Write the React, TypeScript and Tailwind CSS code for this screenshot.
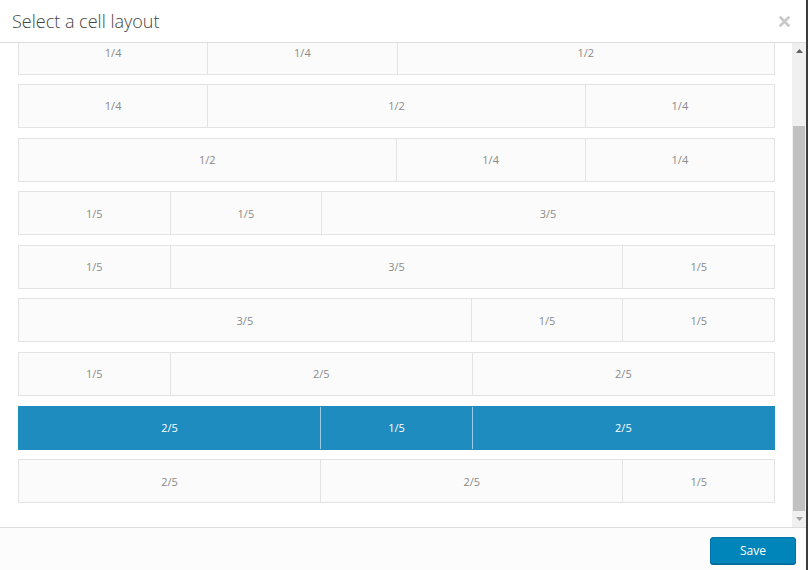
import { useState } from "react";

type Layout = { id: number; cells: { label: string; span: number }[] };

// spans out of 20 (lcm of 4 and 5)
const LAYOUTS: Layout[] = [
  { id: 1, cells: [{ label: "1/4", span: 5 }, { label: "1/4", span: 5 }, { label: "1/2", span: 10 }] },
  { id: 2, cells: [{ label: "1/4", span: 5 }, { label: "1/2", span: 10 }, { label: "1/4", span: 5 }] },
  { id: 3, cells: [{ label: "1/2", span: 10 }, { label: "1/4", span: 5 }, { label: "1/4", span: 5 }] },
  { id: 4, cells: [{ label: "1/5", span: 4 }, { label: "1/5", span: 4 }, { label: "3/5", span: 12 }] },
  { id: 5, cells: [{ label: "1/5", span: 4 }, { label: "3/5", span: 12 }, { label: "1/5", span: 4 }] },
  { id: 6, cells: [{ label: "3/5", span: 12 }, { label: "1/5", span: 4 }, { label: "1/5", span: 4 }] },
  { id: 7, cells: [{ label: "1/5", span: 4 }, { label: "2/5", span: 8 }, { label: "2/5", span: 8 }] },
  { id: 8, cells: [{ label: "2/5", span: 8 }, { label: "1/5", span: 4 }, { label: "2/5", span: 8 }] },
  { id: 9, cells: [{ label: "2/5", span: 8 }, { label: "2/5", span: 8 }, { label: "1/5", span: 4 }] },
];

export default function App() {
  const [selected, setSelected] = useState(8);

  return (
    <div
      className="w-[808px] h-[570px] flex flex-col bg-white border-r-2 border-[#3c3c3c] overflow-hidden"
      style={{ fontFamily: '"Open Sans", "Noto Sans", sans-serif' }}
    >
      <div className="h-[43px] shrink-0 flex items-center justify-between pl-3 pr-4 border-b border-[#dddddd]">
        <h1 className="text-[18px] font-light text-[#444] mt-[1px]">Select a cell layout</h1>
        <button className="text-[#c8c8c8] hover:text-[#666]" aria-label="Close">
          <svg width="11" height="11" viewBox="0 0 11 11">
            <path d="M1.5 1.5 L9.5 9.5 M9.5 1.5 L1.5 9.5" stroke="currentColor" strokeWidth="2.6" strokeLinecap="round" />
          </svg>
        </button>
      </div>

      <div className="flex-1 flex min-h-0">
        <div className="flex-1 overflow-hidden pl-[18px] pr-[17px]">
          <div className="mt-[-12.5px] flex flex-col gap-[9.6px]">
            {LAYOUTS.map((l) => {
              const active = l.id === selected;
              return (
                <button
                  key={l.id}
                  onClick={() => setSelected(l.id)}
                  className={
                    "h-[44px] shrink-0 flex w-full border text-[11px] " +
                    (active ? "bg-[#1e8cbe] border-[#1e8cbe] text-white" : "bg-[#fbfbfb] border-[#e3e3e3] text-[#8a8a8a]")
                  }
                >
                  {l.cells.map((c, i) => (
                    <div
                      key={i}
                      style={{ flexGrow: c.span, flexBasis: 0 }}
                      className={
                        "h-full flex items-center justify-center pt-[1px] " +
                        (i > 0 ? (active ? "border-l border-[#9ccbe3]" : "border-l border-[#e3e3e3]") : "")
                      }
                    >
                      {c.label}
                    </div>
                  ))}
                </button>
              );
            })}
          </div>
        </div>

        <div className="w-[14px] shrink-0 bg-[#f0f0f0] flex flex-col">
          <div className="h-[16px] flex items-center justify-center">
            <svg width="7" height="4" viewBox="0 0 7 4">
              <path d="M0 4 L3.5 0 L7 4 Z" fill="#606060" />
            </svg>
          </div>
          <div className="h-[67px]" />
          <div className="flex-1 mx-[1px] bg-[#c1c1c1]" />
          <div className="h-[16px] flex items-center justify-center">
            <svg width="7" height="4" viewBox="0 0 7 4">
              <path d="M0 0 L7 0 L3.5 4 Z" fill="#a3a3a3" />
            </svg>
          </div>
        </div>
      </div>

      <div className="h-[43px] shrink-0 flex items-center justify-end pr-[10px] bg-[#fcfcfc] border-t border-[#dddddd]">
        <button className="w-[86px] h-[27px] mt-[2px] pt-[1px] rounded-[3px] bg-[#0085ba] border border-[#0073aa] shadow-[0_1px_0_#006799] text-white text-[12px]">
          Save
        </button>
      </div>
    </div>
  );
}
